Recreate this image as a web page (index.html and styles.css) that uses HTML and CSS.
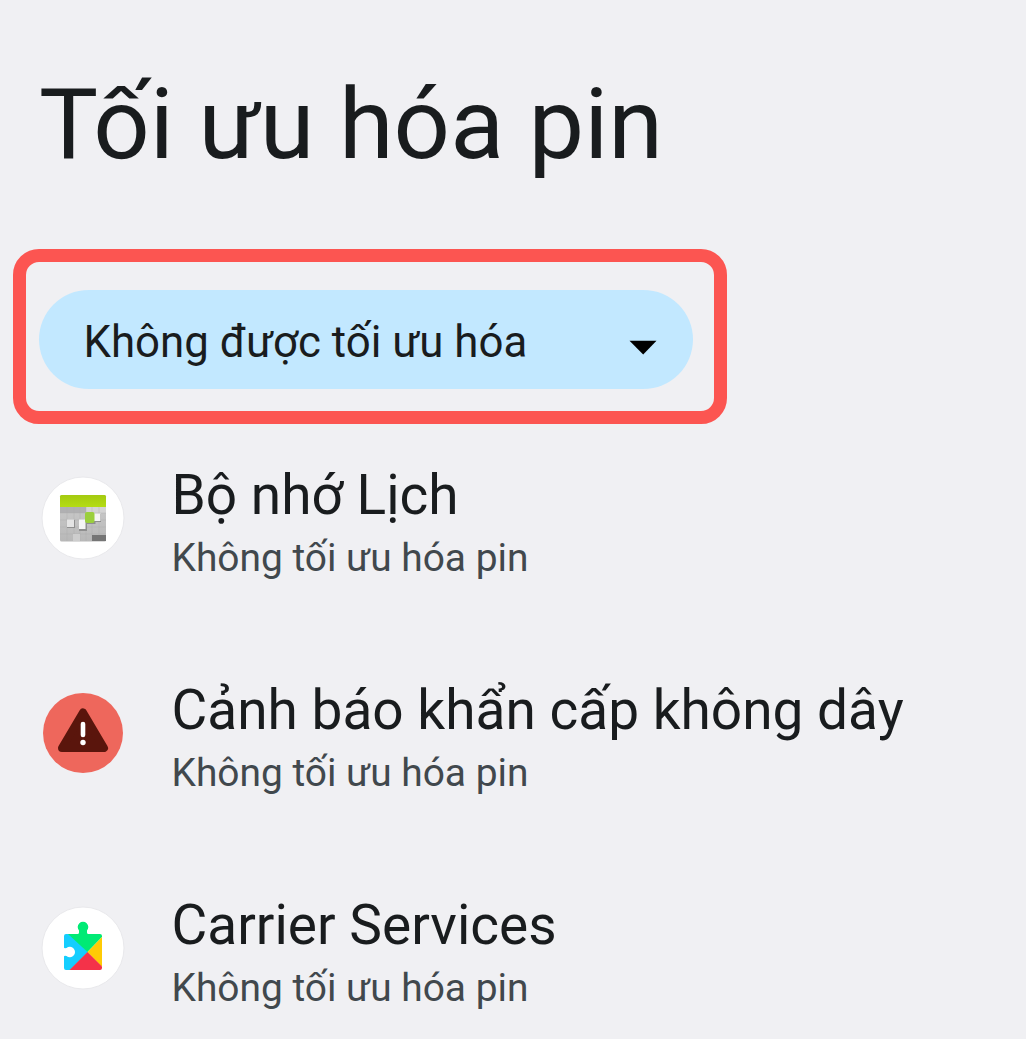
FILE: index.html
```html
<!DOCTYPE html>
<html lang="vi">
<head>
<meta charset="utf-8">
<title>Tối ưu hóa pin</title>
<link rel="stylesheet" href="styles.css">
</head>
<body>
<main class="page">
  <h1 class="title">Tối ưu hóa pin</h1>
  <div class="highlight">
    <button class="filter"><span class="filter-label">Không được tối ưu hóa</span>
      <svg class="caret" width="28" height="15" viewBox="0 0 28 15"><path d="M0.5 0.8H27.5L14.2 14.5Z"/></svg>
    </button>
  </div>
  <ul class="apps">
    <li class="app">
      <svg class="icon" viewBox="0 0 84 84">
        <defs>
          <linearGradient id="cal-header" x2="0" y2="1"><stop stop-color="#a4ca10"/><stop offset="1" stop-color="#b4dc14"/></linearGradient>
          <linearGradient id="cal-body" x2="0" y2="1"><stop stop-color="#cecece"/><stop offset="1" stop-color="#b8b8b8"/></linearGradient>
        </defs>
        <circle cx="42" cy="42" r="41" fill="#fff" stroke="#e9e9ec"/>
        <rect x="19" y="19" width="46" height="46.500" rx="1.500" fill="url(#cal-body)"/>
        <path fill="#b0b0b2" d="M19 31H45V37H19Z"/>
        <path fill="#d4d4d4" d="M45 31H65V37H45Z"/>
        <path fill="none" stroke="#aaa" stroke-opacity=".6" stroke-width=".6" d="M26 31V65M33 31V65M39 31V65M45 31V65M51 31V65M58 31V65M19 37H65M19 44H65M19 51H65M19 58H65"/>
        <path fill="#cdcdcd" d="M32 58H39V65H32Z"/>
        <path fill="#757575" d="M51 59H65V65H51Z"/>
        <path fill="#8f8f8f" d="M26 44H34V52H26ZM38 44H46V55H38ZM53 38H60V46H53ZM45 40H54.500V48H45Z"/>
        <path fill="#e4e4e4" d="M26 43.500H33V51H26Z"/>
        <path fill="#f5f5f5" d="M38 43.500H44.500V53H38ZM53 37.500H59.500V45H53Z"/>
        <rect x="44" y="36" width="9.500" height="11" rx="2" fill="#9bcf3d"/>
        <path fill="url(#cal-header)" d="M19 31V20.500Q19 19 20.500 19H63.500Q65 19 65 20.500V31Z"/>
      </svg>
      <div class="text"><h2 class="name">Bộ nhớ Lịch</h2><p class="status">Không tối ưu hóa pin</p></div>
    </li>
    <li class="app">
      <svg class="icon" viewBox="0 0 84 84">
        <circle cx="42" cy="42" r="40" fill="#ee675c"/>
        <path d="M42 21.500L63 57H21Z" fill="#5a150c" stroke="#5a150c" stroke-width="8" stroke-linejoin="round"/>
        <path d="M42 33V44" stroke="#fff" stroke-width="4.600" stroke-linecap="round"/>
        <circle cx="42" cy="51.500" r="2.700" fill="#fff"/>
      </svg>
      <div class="text"><h2 class="name">Cảnh báo khẩn cấp không dây</h2><p class="status">Không tối ưu hóa pin</p></div>
    </li>
    <li class="app">
      <svg class="icon" viewBox="0 0 84 84">
        <defs>
          <clipPath id="puzzle"><path d="M25 28H36.500Q38 28 38 26.500V24.500A5.300 5.300 0 1 1 46 24.500V26.500Q46 28 47.500 28H59Q61 28 61 30V62Q61 64 59 64H25Q23 64 23 62V50.500Q23 49.500 25.500 50A5.200 5.200 0 1 0 25.500 42Q23 42.500 23 41.500V30Q23 28 25 28Z"/></clipPath>
        </defs>
        <circle cx="42" cy="42" r="41" fill="#fff" stroke="#e9e9ec"/>
        <g class="puzzle" clip-path="url(#puzzle)">
          <path fill="#14ceff" d="M23 27H28L47 46L29 64H23Z"/>
          <path fill="#00ea75" d="M27 28V15H61V31L46.500 46Z"/>
          <path fill="#ffcb05" d="M61 31V61L46.500 46Z"/>
          <path fill="#f43249" d="M28.500 64L46.500 46L61 60.500V64Z"/>
        </g>
      </svg>
      <div class="text"><h2 class="name">Carrier Services</h2><p class="status">Không tối ưu hóa pin</p></div>
    </li>
  </ul>
</main>
</body>
</html>
```
FILE: styles.css
```css
* { box-sizing: border-box; }
body { margin: 0; background: #f0f0f3; color: #191c1e; font-family: Roboto, sans-serif; }
.page { width: 1026px; height: 1039px; overflow: hidden; padding-top: 64px; }
.title { margin: 0 0 0 39px; font-size: 99.1px; font-weight: 400; line-height: 120px; white-space: nowrap; }
.highlight { width: 714px; height: 175px; margin: 65px 0 0 13px; padding: 28px 13px; border: 13px solid #fc5551; border-radius: 26px; }
.filter { display: flex; align-items: center; justify-content: space-between; width: 654px; height: 99px; padding: 4px 36px 0 44.5px; border: 0; border-radius: 50px; background: #c2e8ff; color: #191c1e; font: 400 43.8px/60px Roboto, sans-serif; white-space: nowrap; }
.caret { margin-top: 12px; fill: #000; }
.apps { list-style: none; margin: 0; padding: 38px 0 0 41px; }
.app { display: flex; height: 215px; }
.icon { flex: none; width: 84px; height: 84px; margin-top: 14px; }
.text { margin-left: 46.5px; white-space: nowrap; }
.name { margin: 0; font-size: 55px; font-weight: 400; line-height: 66px; }
.status { margin: 0; color: #41484d; font-size: 38.9px; line-height: 60px; }
```
